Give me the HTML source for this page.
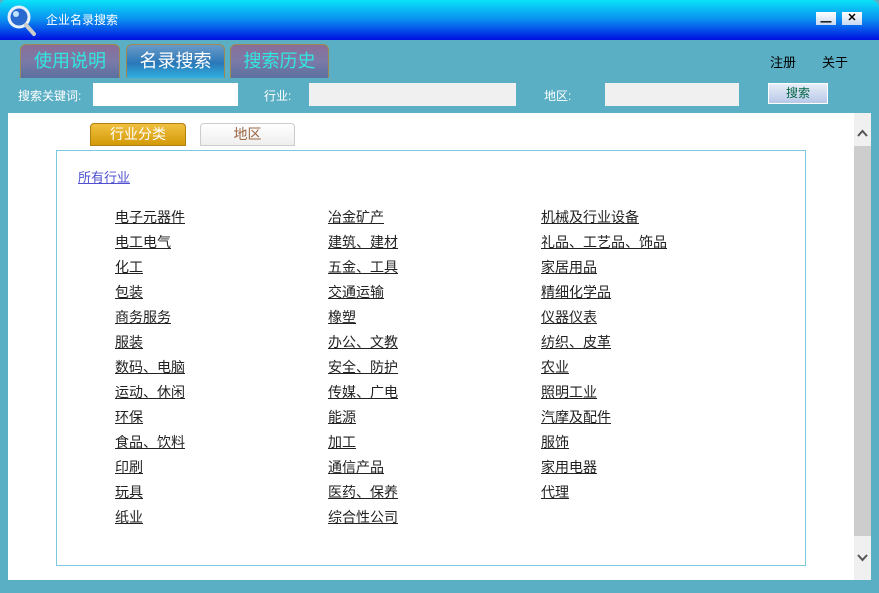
<!DOCTYPE html>
<html><head><meta charset="utf-8"><style>
*{margin:0;padding:0;box-sizing:border-box}
body{width:879px;height:593px;background:#5aafc4;font-family:"Liberation Sans","Noto Sans CJK SC",sans-serif;position:relative;overflow:hidden}
.title{position:absolute;left:0;top:0;width:879px;height:40px;background:linear-gradient(#0ae4f8,#0a8cf0 50%,#0010e0);border-radius:6px 8px 0 0}
.title span{position:absolute;left:46px;top:11px;color:#fff;font-size:12px}
.wb{position:absolute;top:12px;width:20px;height:13px;background:linear-gradient(#fff,#c8d8f0);font-size:11px;text-align:center;line-height:13px;font-weight:bold;color:#000}
.tab{position:absolute;top:44px;height:34px;border:1px solid #a08850;border-bottom:none;border-radius:6px 6px 0 0;font-size:18px;text-align:center;line-height:32px}
.t1{background:linear-gradient(#8a6e98,#7a7aa8 50%,#5a70a0);color:#30e8e0}
.t2{background:linear-gradient(#6a9ac8,#2a78b8 55%,#30b0e0);color:#fff}
.lbl{position:absolute;top:87px;font-size:12px;color:#fff}
.inp{position:absolute;top:83px;height:23px;background:#f0f0f0}
.content{position:absolute;left:8px;top:113px;width:863px;height:467px;background:#fff}
.link{position:absolute;font-size:14px;color:#222;text-decoration:underline}
</style></head><body>
<div class="title"><svg style="position:absolute;left:7px;top:5px" width="30" height="32" viewBox="0 0 30 32"><circle cx="12" cy="12" r="10" fill="#2a6ad0" stroke="#e8f0f8" stroke-width="3"/><circle cx="9" cy="9" r="3" fill="#bfe4ff"/><line x1="19" y1="20" x2="27" y2="29" stroke="#ccc" stroke-width="4" stroke-linecap="round"/></svg><span>企业名录搜索</span>
<div class="wb" style="left:816px">▁</div><div class="wb" style="left:842px">✕</div></div>
<div class="tab t1" style="left:20px;width:100px">使用说明</div>
<div class="tab t2" style="left:126px;width:99px">名录搜索</div>
<div class="tab t1" style="left:230px;width:99px">搜索历史</div>
<div style="position:absolute;left:770px;top:52px;font-size:13px;color:#000">注册</div>
<div style="position:absolute;left:822px;top:52px;font-size:13px;color:#000">关于</div>
<div class="lbl" style="left:18px">搜索关键词:</div>
<div class="inp" style="left:93px;width:145px;background:#fff"></div>
<div class="lbl" style="left:264px">行业:</div>
<div class="inp" style="left:309px;width:207px"></div>
<div class="lbl" style="left:544px">地区:</div>
<div class="inp" style="left:605px;width:134px"></div>
<div style="position:absolute;left:768px;top:83px;width:60px;height:21px;border:1px solid #fff;background:linear-gradient(#e8eef8,#b8c8e8);font-size:12px;color:#064;text-align:center;line-height:19px">搜索</div>
<div class="content">
<div style="position:absolute;left:82px;top:10px;width:96px;height:23px;background:linear-gradient(#f0c040,#d49a08);border:1px solid #b08010;border-radius:4px 4px 0 0;color:#fff;font-size:14px;text-align:center;line-height:21px">行业分类</div>
<div style="position:absolute;left:192px;top:10px;width:95px;height:23px;background:linear-gradient(#fff,#eee);border:1px solid #ccc;border-radius:4px 4px 0 0;color:#964;font-size:14px;text-align:center;line-height:21px">地区</div>
<div style="position:absolute;left:48px;top:37px;width:750px;height:416px;border:1px solid #7cc8e0"></div>
<div class="link" style="left:70px;top:54px;color:#5050d0;font-size:13px">所有行业</div>
<div style="position:absolute;left:846px;top:0;width:17px;height:467px;background:#f0f0f0"></div>
<div style="position:absolute;left:846px;top:33px;width:17px;height:390px;background:#cdcdcd"></div>
<svg style="position:absolute;left:849px;top:16px" width="11" height="8"><path d="M1 7L5.5 2L10 7" fill="none" stroke="#555" stroke-width="2"/></svg>
<svg style="position:absolute;left:849px;top:441px" width="11" height="8"><path d="M1 1L5.5 6L10 1" fill="none" stroke="#555" stroke-width="2"/></svg>
</div>
<div id="cols"></div>
<script>
var c=[["电子元器件","电工电气","化工","包装","商务服务","服装","数码、电脑","运动、休闲","环保","食品、饮料","印刷","玩具","纸业"],["冶金矿产","建筑、建材","五金、工具","交通运输","橡塑","办公、文教","安全、防护","传媒、广电","能源","加工","通信产品","医药、保养","综合性公司"],["机械及行业设备","礼品、工艺品、饰品","家居用品","精细化学品","仪器仪表","纺织、皮革","农业","照明工业","汽摩及配件","服饰","家用电器","代理"]];
var x=[115,328,541],h="";
c.forEach(function(col,i){col.forEach(function(t,j){h+='<div class="link" style="left:'+x[i]+'px;top:'+(207+j*25)+'px">'+t+'</div>'})});
document.getElementById("cols").innerHTML=h;
</script>
</body></html>
